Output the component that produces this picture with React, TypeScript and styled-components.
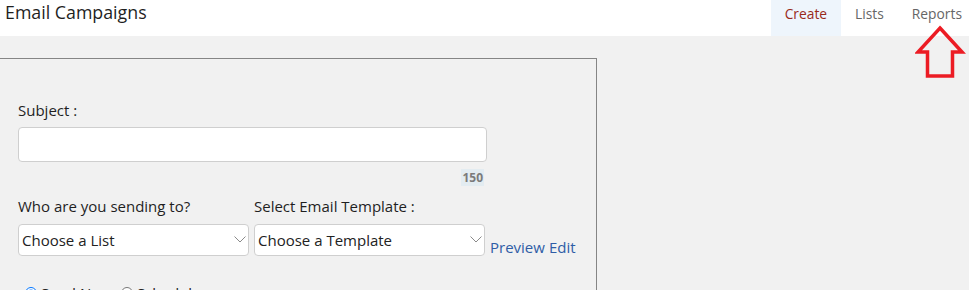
import React from "react";
import styled, { createGlobalStyle } from "styled-components";

const Global = createGlobalStyle`
  html, body { margin: 0; padding: 0; background: #ffffff; }
  body { font-family: "Open Sans", "Liberation Sans", sans-serif; color: #222; overflow: hidden; }
  * { box-sizing: border-box; }
`;

const Page = styled.div`
  position: relative;
  width: 969px;
  height: 308px;
  overflow: hidden;
  background: #ffffff;
`;

const Header = styled.header`
  height: 36px;
  display: flex;
  justify-content: space-between;
  align-items: flex-start;
  background: #ffffff;
`;

const Title = styled.h1`
  margin: 0;
  padding-left: 5px;
  font-size: 17.8px;
  font-weight: 400;
  line-height: 25px;
  color: #1f1f1f;
`;

const Nav = styled.nav`
  display: flex;
  height: 36px;
`;

const Tab = styled.a<{ $active?: boolean; $last?: boolean }>`
  display: flex;
  align-items: flex-start;
  height: 36px;
  padding: 0 ${(p) => (p.$last ? "7px" : "14px")} 0 14px;
  font-size: 13.8px;
  line-height: 27px;
  color: ${(p) => (p.$active ? "#992a1a" : "#666666")};
  background: ${(p) => (p.$active ? "#eef5fc" : "transparent")};
  text-decoration: none;
  cursor: pointer;
`;

const Body = styled.main`
  height: 254px;
  overflow: hidden;
  background: #f1f1f1;
  padding-top: 22px;
`;

const Card = styled.section`
  width: 597px;
  min-height: 260px;
  border: 1px solid #858585;
  border-left: 0;
  padding: 41px 0 0 18px;
`;

const Label = styled.label`
  display: block;
  font-size: 15px;
  line-height: 20px;
  color: #1f1f1f;
`;

const TextInput = styled.input`
  display: block;
  width: 469px;
  height: 35px;
  margin-top: 7px;
  border: 1px solid #cfcfcf;
  border-radius: 4px;
  background: #ffffff;
  outline: none;
`;

const CounterRow = styled.div`
  width: 466px;
  display: flex;
  justify-content: flex-end;
  margin-top: 7px;
`;

const Counter = styled.span`
  display: inline-block;
  padding: 0 1px;
  height: 17px;
  font-size: 12px;
  line-height: 17px;
  font-weight: 700;
  color: #7b7b7b;
  background: #e3ecf1;
`;

const FieldsRow = styled.div`
  display: flex;
  align-items: flex-end;
  margin-top: 10px;
`;

const Field = styled.div<{ $width: number }>`
  display: flex;
  flex-direction: column;
  gap: 8px;
  width: ${(p) => p.$width}px;
  margin-right: 5px;
`;

const SelectWrap = styled.div`
  position: relative;
  width: 100%;
  height: 32px;
`;

const Select = styled.select`
  width: 100%;
  height: 32px;
  padding: 0 18px 0 3px;
  appearance: none;
  -webkit-appearance: none;
  border: 1px solid #cfcfcf;
  border-radius: 4px;
  background: #ffffff;
  font-family: "Open Sans", "Liberation Sans", sans-serif;
  font-size: 15px;
  color: #222;
  outline: none;
`;

const Chevron = styled.svg`
  position: absolute;
  right: 3px;
  top: 12px;
  pointer-events: none;
`;

const Links = styled.div`
  display: flex;
  gap: 4px;
  margin-bottom: -1px;
`;

const LinkText = styled.a`
  font-size: 15px;
  line-height: 20px;
  color: #2f5da6;
  text-decoration: none;
  cursor: pointer;
`;

const RadioRow = styled.div`
  display: flex;
  align-items: center;
  gap: 4px;
  margin-top: 27px;
  padding-left: 2px;
  font-size: 15px;
  line-height: 20px;
`;

const RadioLabel = styled.label`
  display: flex;
  align-items: center;
  gap: 2px;
`;

const Radio = styled.input`
  margin: 0 2px 0 5px;
  width: 12px;
  height: 12px;
`;

const Annotation = styled.svg`
  position: absolute;
  left: 915px;
  top: 25px;
`;

function ChevronIcon() {
  return (
    <Chevron width="12" height="7" viewBox="0 0 12 7">
      <path d="M0.5 0.5 L6 6 L11.5 0.5" fill="none" stroke="#8a8a8a" strokeWidth="1" />
    </Chevron>
  );
}

export default function App() {
  return (
    <>
      <Global />
      <Page>
        <Header>
          <Title>Email Campaigns</Title>
          <Nav>
            <Tab $active>Create</Tab>
            <Tab>Lists</Tab>
            <Tab $last>Reports</Tab>
          </Nav>
        </Header>
        <Body>
          <Card>
            <Label>Subject :</Label>
            <TextInput type="text" />
            <CounterRow>
              <Counter>150</Counter>
            </CounterRow>
            <FieldsRow>
              <Field $width={231}>
                <Label>Who are you sending to?</Label>
                <SelectWrap>
                  <Select defaultValue="">
                    <option value="">Choose a List</option>
                  </Select>
                  <ChevronIcon />
                </SelectWrap>
              </Field>
              <Field $width={231}>
                <Label>Select Email Template :</Label>
                <SelectWrap>
                  <Select defaultValue="">
                    <option value="">Choose a Template</option>
                  </Select>
                  <ChevronIcon />
                </SelectWrap>
              </Field>
              <Links>
                <LinkText>Preview</LinkText>
                <LinkText>Edit</LinkText>
              </Links>
            </FieldsRow>
            <RadioRow>
              <RadioLabel>
                <Radio type="radio" name="when" defaultChecked />
                Send Now
              </RadioLabel>
              <RadioLabel>
                <Radio type="radio" name="when" />
                Schedule
              </RadioLabel>
            </RadioRow>
          </Card>
        </Body>
        <Annotation width="52" height="56" viewBox="0 0 52 56">
          <polygon
            points="25,3 47,27 37.5,27 37.5,51 12.5,51 12.5,27 3,27"
            fill="none"
            stroke="#ec1c24"
            strokeWidth="3.5"
            strokeLinejoin="miter"
          />
        </Annotation>
      </Page>
    </>
  );
}
